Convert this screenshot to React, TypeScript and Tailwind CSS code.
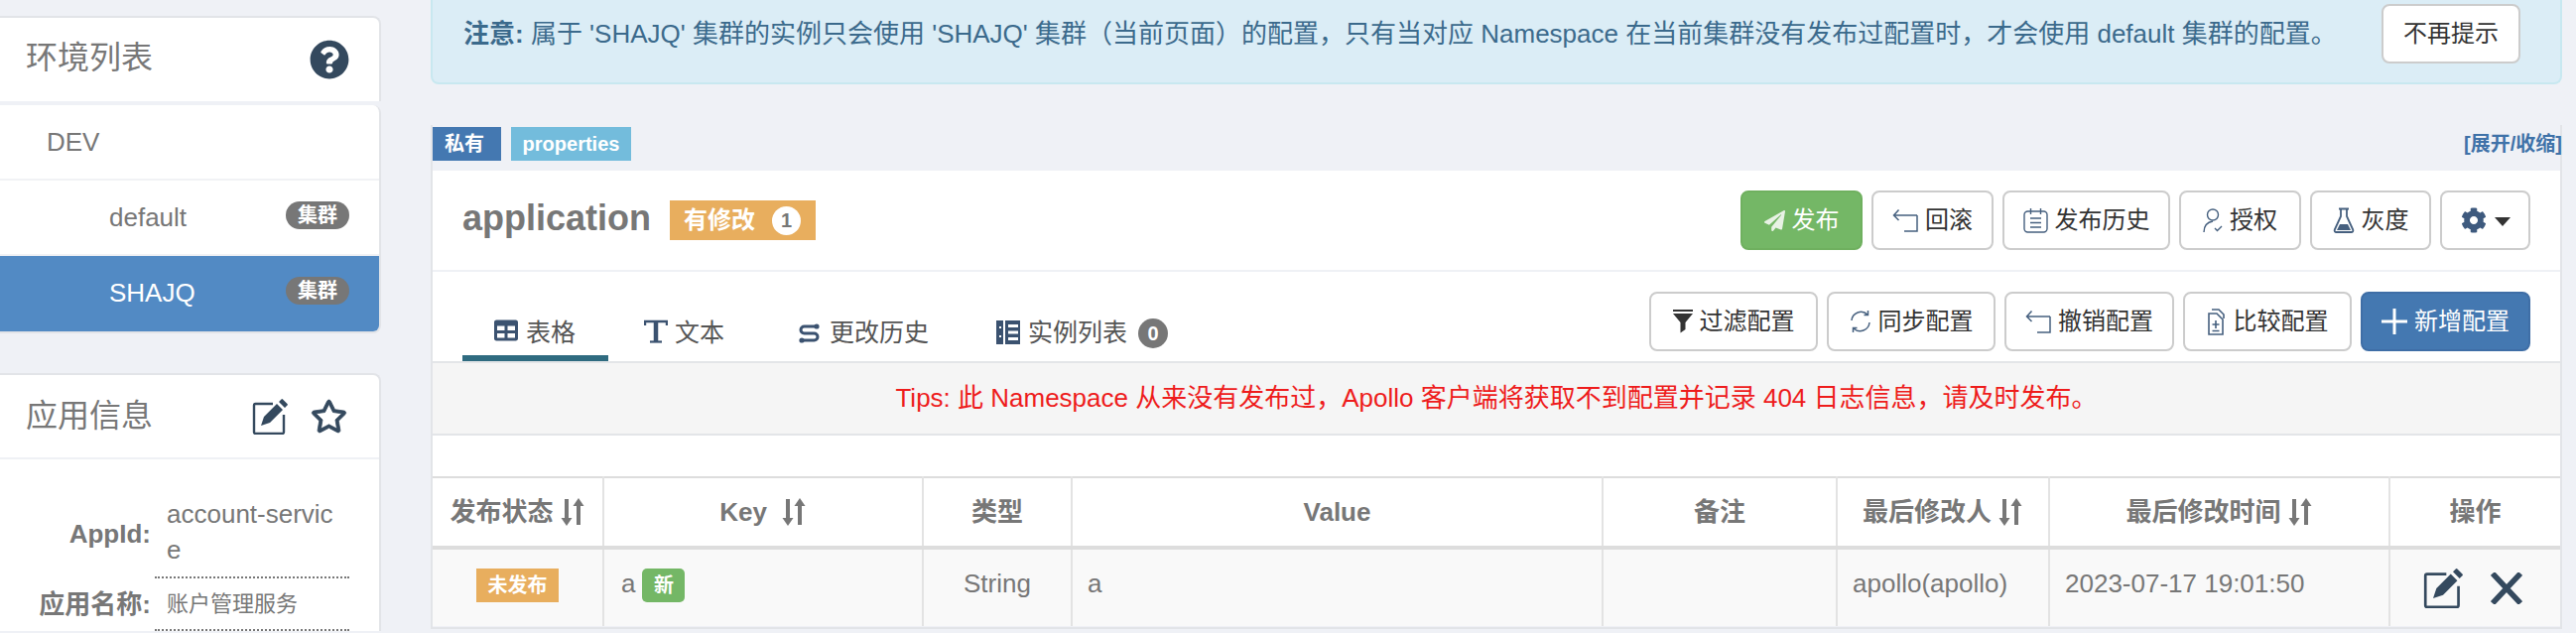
import React from "react";
import { FaQuestionCircle, FaRegStar, FaPaperPlane, FaCog, FaTable } from "react-icons/fa";

const ink = "#46607f";

const BackIcon = () => (
  <svg width="26" height="24" viewBox="0 0 26 24" fill="none" stroke={ink} strokeWidth="1.5" className="shrink-0">
    <path d="M25 7H2M6.5 1.5L1.5 7l5 5M25 7v16H12" />
  </svg>
);
const NotesIcon = () => (
  <svg width="25" height="26" viewBox="0 0 25 26" fill="none" stroke={ink} strokeWidth="1.4" className="shrink-0">
    <rect x="1" y="4" width="23" height="21" rx="3.5" />
    <path d="M7.5 1v6M17.5 1v6M7 11h11M7 15.5h11M7 20h11" />
  </svg>
);
const UserCheckIcon = () => (
  <svg width="20" height="26" viewBox="0 0 20 26" fill="none" stroke={ink} strokeWidth="1.4" className="shrink-0">
    <circle cx="10" cy="7.5" r="5.5" />
    <path d="M1 25c0-6 3-10 9-11M12 21l2.5 2.5 4.5-4.5" />
  </svg>
);
const FlaskIcon = () => (
  <svg width="22" height="26" viewBox="0 0 22 26" fill="none" stroke={ink} strokeWidth="1.8" className="shrink-0">
    <path d="M6 1.5h10M8 2v7L1.8 22.5c-.6 1.3.2 2.5 1.6 2.5h15.2c1.4 0 2.2-1.2 1.6-2.5L14 9V2" />
    <path d="M7 17h8l3 6H4z" fill={ink} stroke="none" />
  </svg>
);
const FilterIcon = () => (
  <svg width="20" height="24" viewBox="0 0 20 24" className="shrink-0" fill="#333">
    <path d="M0 0h20v2H0zM0 4h20l-7.5 9v7l-5 3.5V13z" />
  </svg>
);
const SyncIcon = () => (
  <svg width="22" height="24" viewBox="0 0 22 24" fill="none" stroke={ink} strokeWidth="1.5" className="shrink-0">
    <path d="M2 11a9.5 9.5 0 0 1 16-6M20 13a9.5 9.5 0 0 1-16 6M18.5 1v4.5h-4M3.5 23v-4.5h4" />
  </svg>
);
const CompareIcon = () => (
  <svg width="20" height="28" viewBox="0 0 20 28" fill="none" stroke={ink} strokeWidth="1.6" className="shrink-0">
    <path d="M5 2h7l5 5v4M2 6h8l6 6v15H2zM9 13v8M5.5 17h7M5.5 23.5h7" />
  </svg>
);
const PlusIcon = () => (
  <svg width="26" height="26" viewBox="0 0 26 26" fill="#fff" className="shrink-0">
    <path d="M11.5 0h3v11.5H26v3H14.5V26h-3V14.5H0v-3h11.5z" />
  </svg>
);
const SerifTIcon = () => (
  <svg width="24" height="24" viewBox="0 0 24 24" fill="none" stroke="#3b5270" className="shrink-0">
    <path d="M1 6V2h22v4" strokeWidth="2.4" />
    <path d="M12 2v20" strokeWidth="4.5" />
    <path d="M6 22.5h12" strokeWidth="2.2" />
  </svg>
);
const ShuffleIcon = () => (
  <svg width="21" height="20" viewBox="0 0 21 20" fill="none" stroke="#3b5270" strokeWidth="3" className="shrink-0">
    <path d="M17 3H5.5a3.5 3.5 0 0 0 0 7h10a3.5 3.5 0 0 1 0 7H4" />
    <circle cx="18" cy="3" r="2.6" fill="#3b5270" stroke="none" />
    <circle cx="3" cy="17" r="2.6" fill="#3b5270" stroke="none" />
  </svg>
);
const ServerIcon = () => (
  <svg width="24" height="24" viewBox="0 0 24 24" className="shrink-0">
    <path d="M0 0h24v24H0z" fill="#3b5270" />
    <path d="M7 0h2v24H7zM3 6h2v2H3zM3 15h2v2H3zM12 4h10v3H12zM12 10.5h10v3H12zM12 17h10v3H12z" fill="#fff" />
  </svg>
);
const SortIcon = () => (
  <svg width="26" height="28" viewBox="0 0 26 28" fill="#777" className="shrink-0">
    <path d="M5 1h4v19h3.5L7 28 1.5 20H5zM17 27h4V8h3.5L19 0l-5.5 8H17z" />
  </svg>
);
const EditIcon = ({ size }: { size: number }) => (
  <svg width={size} height={size} viewBox="0 0 36 36" className="shrink-0" fill="#34495e">
    <path d="M21 5H3.5A1.5 1.5 0 0 0 2 6.5v27A1.5 1.5 0 0 0 3.5 35h27a1.5 1.5 0 0 0 1.5-1.5V16" fill="none" stroke="#34495e" strokeWidth="2.4" />
    <path d="M9 27l3-9L25 5l6 6-13 13zM27 3l2.5-2.5a1 1 0 0 1 1.5 0l4.5 4.5a1 1 0 0 1 0 1.5L33 9z" />
  </svg>
);
const CrossIcon = () => (
  <svg width="32" height="32" viewBox="0 0 32 32" fill="none" stroke="#34495e" strokeWidth="5.5" className="shrink-0">
    <path d="M2 1l28 30M30 1L2 31" />
  </svg>
);

const Pill = () => (
  <span className="ml-auto mb-1 flex h-[28px] w-[64px] items-center justify-center rounded-[14px] bg-[#777] text-[20px] font-bold text-white">集群</span>
);

const Btn = ({ w, icon, children, green, blue }: { w: string; icon?: React.ReactNode; children?: React.ReactNode; green?: boolean; blue?: boolean }) => (
  <div
    className={`${w} flex h-[60px] shrink-0 items-center justify-center gap-[7px] rounded-lg border-2 text-[24px] ${
      green ? "border-[#6fb05f] bg-[#74b766] text-white" : blue ? "border-[#3f6ea6] bg-[#4478b1] text-white" : "border-[#ccc] bg-white text-[#333]"
    }`}
  >
    {icon}
    {children && <span>{children}</span>}
  </div>
);

const Th = ({ w, children, sort, first, wide }: { w: string; children: React.ReactNode; sort?: boolean; first?: boolean; wide?: boolean }) => (
  <th className={`${w} ${first ? "" : "border-l-2"} border-[#e3e3e3] p-0 text-[26px] font-bold text-[#777]`}>
    <div className={`flex items-center justify-center ${wide ? "gap-[14px]" : "gap-[6px]"}`}>
      <span>{children}</span>
      {sort && <SortIcon />}
    </div>
  </th>
);

export default function App() {
  return (
    <div className="flex h-[638px] w-[2596px] overflow-hidden bg-[#eff1f6] text-[26px] text-[#777] [font-family:'Liberation_Sans','Noto_Sans_CJK_SC',sans-serif]">
      {/* left column */}
      <aside className="w-[384px] shrink-0 pt-4">
        <div className="flex h-[86px] items-center justify-between rounded-tr-lg border-t-2 border-r-2 border-[#e2e4e8] bg-white pl-[26px] pr-[30px]">
          <h3 className="mt-[-4px] text-[32px] font-normal">环境列表</h3>
          <FaQuestionCircle className="text-[40px] text-[#34495e]" />
        </div>
        <div className="mt-1 overflow-hidden rounded-tr-lg rounded-br-lg border-r-2 border-b-2 border-[#e2e4e8] bg-white">
          <div className="flex h-[76px] items-center border-b-2 border-[#f1f2f5] pl-[47px]">DEV</div>
          <div className="flex h-[76px] items-center border-b-2 border-[#f1f2f5] pl-[110px] pr-[30px]">
            default
            <Pill />
          </div>
          <div className="flex h-[76px] items-center bg-[#528ac4] pb-[2px] pl-[110px] pr-[30px] text-white">
            SHAJQ
            <Pill />
          </div>
        </div>

        <div className="mt-[40px] rounded-tr-lg border-t-2 border-r-2 border-[#e2e4e8] bg-white">
          <div className="flex h-[85px] items-center justify-between border-b-2 border-[#eff1f5] pl-[26px] pr-[32px]">
            <h3 className="mt-[-2px] text-[32px] font-normal">应用信息</h3>
            <div className="flex items-center gap-[23px]">
              <EditIcon size={36} />
              <FaRegStar className="text-[37px] text-[#34495e]" stroke="#34495e" strokeWidth={12} />
            </div>
          </div>
          <div className="pt-[37px]">
            <div className="flex items-center">
              <div className="mb-[6px] w-[152px] text-right font-bold">AppId:</div>
              <div className="ml-[4px] w-[196px] border-b-2 border-dotted border-[#777] pb-[9px] pl-[12px] pr-[10px] leading-[36px] break-all">account-service</div>
            </div>
            <div className="flex h-[53px] items-center">
              <div className="w-[152px] text-right font-bold">应用名称:</div>
              <div className="ml-[4px] flex h-full w-[196px] items-center border-b-2 border-dotted border-[#777] pl-[12px] text-[22px]">账户管理服务</div>
            </div>
          </div>
        </div>
      </aside>

      {/* right column */}
      <main className="ml-[50px] w-[2148px] shrink-0">
        <div className="flex h-[85px] items-start justify-between rounded-b-lg border-x-2 border-b-2 border-[#c8e8f0] bg-[#dbedf6] pt-[4px] pl-[31px] pr-[40px] text-[#3b6a8c]">
          <p className="mt-[12px] leading-[36px] whitespace-nowrap">
            <b>注意:</b> 属于 'SHAJQ' 集群的实例只会使用 'SHAJQ' 集群（当前页面）的配置，只有当对应 Namespace 在当前集群没有发布过配置时，才会使用 default 集群的配置。
          </p>
          <Btn w="w-[140px]">不再提示</Btn>
        </div>

        <section className="mt-[41px] h-[508px] border-x-2 border-b-2 border-[#e2e4e8]">
          <div className="flex h-[46px] items-start gap-[10px] pt-[2px]">
            <span className="flex h-[34px] w-[69px] items-center justify-center bg-[#4478b1] pr-[5px] text-[20px] font-bold text-white">私有</span>
            <span className="flex h-[34px] w-[121px] items-center justify-center bg-[#73bcdc] text-[20px] font-bold text-white">properties</span>
            <a className="-mr-[2px] ml-auto mt-[2px] text-[20px] font-bold text-[#3f72a8]">[展开/收缩]</a>
          </div>

          <div className="bg-white">
            <div className="flex h-[102px] justify-between border-b-2 border-[#eff1f5] pl-[30px] pr-[30px]">
              <div className="flex h-full items-center gap-[19px] pb-[4px]">
                <h2 className="text-[36px] font-bold leading-none">application</h2>
                <span className="mt-[4px] flex h-[40px] w-[147px] items-center gap-[17px] bg-[#e8ae5e] pl-[14px] text-[24px] font-bold text-white">
                  有修改
                  <span className="flex h-[29px] w-[29px] items-center justify-center rounded-full bg-white text-[20px] text-[#777]">1</span>
                </span>
              </div>
              <div className="flex gap-[9px] pt-[20px]">
                <Btn w="w-[123px]" green icon={<FaPaperPlane className="text-[21px] text-[#e8f2e5]" />}>发布</Btn>
                <Btn w="w-[123px]" icon={<BackIcon />}>回滚</Btn>
                <Btn w="w-[169px]" icon={<NotesIcon />}>发布历史</Btn>
                <Btn w="w-[123px]" icon={<UserCheckIcon />}>授权</Btn>
                <Btn w="w-[122px]" icon={<FlaskIcon />}>灰度</Btn>
                <Btn w="w-[91px]" icon={<FaCog className="text-[26px] text-[#3e5a7e]" />}>
                  <span className="ml-[1px] inline-block h-0 w-0 border-x-[8px] border-t-[9px] border-x-transparent border-t-[#333] align-middle" />
                </Btn>
              </div>
            </div>

            <div className="flex h-[90px] items-start justify-between pl-[30px] pr-[30px]">
              <nav className="flex h-full text-[25px] text-[#555]">
                <div className="flex h-full w-[147px] items-start gap-[8px] rounded-t-[3px] border-b-[6px] border-[#2f6b80] pl-[32px] pt-[43px]">
                  <FaTable className="mt-[4px] text-[24px] text-[#3b5270]" />
                  表格
                </div>
                <div className="ml-[4px] flex h-full items-start gap-[7px] pl-[32px] pt-[43px]">
                  <span className="mt-[5px]"><SerifTIcon /></span>
                  文本
                </div>
                <div className="ml-[43px] flex h-full items-start gap-[10px] pl-[32px] pt-[43px]">
                  <span className="mt-[9px]"><ShuffleIcon /></span>
                  更改历史
                </div>
                <div className="ml-[36px] flex h-full items-start gap-[8px] pl-[32px] pt-[43px]">
                  <span className="mt-[6px]"><ServerIcon /></span>
                  实例列表
                  <span className="ml-[3px] mt-[4px] flex h-[30px] w-[30px] items-center justify-center rounded-full bg-[#777] text-[20px] font-bold text-white">0</span>
                </div>
              </nav>
              <div className="flex gap-[9px] pt-[20px]">
                <Btn w="w-[170px]" icon={<FilterIcon />}>过滤配置</Btn>
                <Btn w="w-[170px]" icon={<SyncIcon />}>同步配置</Btn>
                <Btn w="w-[171px]" icon={<BackIcon />}>撤销配置</Btn>
                <Btn w="w-[170px]" icon={<CompareIcon />}>比较配置</Btn>
                <Btn w="w-[171px]" blue icon={<PlusIcon />}>新增配置</Btn>
              </div>
            </div>

            <div className="flex h-[75px] items-center justify-center border-y-2 border-[#e3e5e8] bg-[#f5f5f5] text-[#ee1c1c]">
              Tips: 此 Namespace 从来没有发布过，Apollo 客户端将获取不到配置并记录 404 日志信息，请及时发布。
            </div>

            <div className="h-[41px]" />

            <table className="w-full table-fixed border-collapse">
              <thead>
                <tr className="h-[71px] border-t-2 border-b-4 border-[#ddd]">
                  <Th w="w-[172px]" first sort>发布状态</Th>
                  <Th w="w-[322px]" sort wide>Key</Th>
                  <Th w="w-[150px]">类型</Th>
                  <Th w="w-[535px]">Value</Th>
                  <Th w="w-[236px]">备注</Th>
                  <Th w="w-[214px]" sort>最后修改人</Th>
                  <Th w="w-[343px]" sort>最后修改时间</Th>
                  <Th w="w-[172px]">操作</Th>
                </tr>
              </thead>
              <tbody>
                <tr className="h-[79px] bg-[#f9f9f9] align-top">
                  <td className="p-0 pt-[19px]">
                    <span className="mx-auto flex h-[34px] w-[83px] items-center justify-center bg-[#e8ae5e] text-[20px] font-bold text-white">未发布</span>
                  </td>
                  <td className="border-l-2 border-[#e3e3e3] p-0 pl-[17px] pt-[19px]">
                    <div className="flex items-start gap-[7px]">
                      <span className="leading-[30px]">a</span>
                      <span className="flex h-[34px] w-[43px] items-center justify-center rounded-[5px] bg-[#74b766] text-[20px] font-bold text-white">新</span>
                    </div>
                  </td>
                  <td className="border-l-2 border-[#e3e3e3] p-0 pt-[19px] text-center leading-[30px]">String</td>
                  <td className="border-l-2 border-[#e3e3e3] p-0 pl-[15px] pt-[19px] leading-[30px]">a</td>
                  <td className="border-l-2 border-[#e3e3e3]" />
                  <td className="border-l-2 border-[#e3e3e3] p-0 pl-[15px] pt-[19px] leading-[30px]">apollo(apollo)</td>
                  <td className="border-l-2 border-[#e3e3e3] p-0 pl-[15px] pt-[19px] leading-[30px] whitespace-nowrap">2023-07-17 19:01:50</td>
                  <td className="border-l-2 border-[#e3e3e3] p-0 pl-[33px] pt-[19px]">
                    <div className="flex items-center gap-[28px]">
                      <EditIcon size={40} />
                      <CrossIcon />
                    </div>
                  </td>
                </tr>
              </tbody>
            </table>
          </div>
        </section>
      </main>
    </div>
  );
}
